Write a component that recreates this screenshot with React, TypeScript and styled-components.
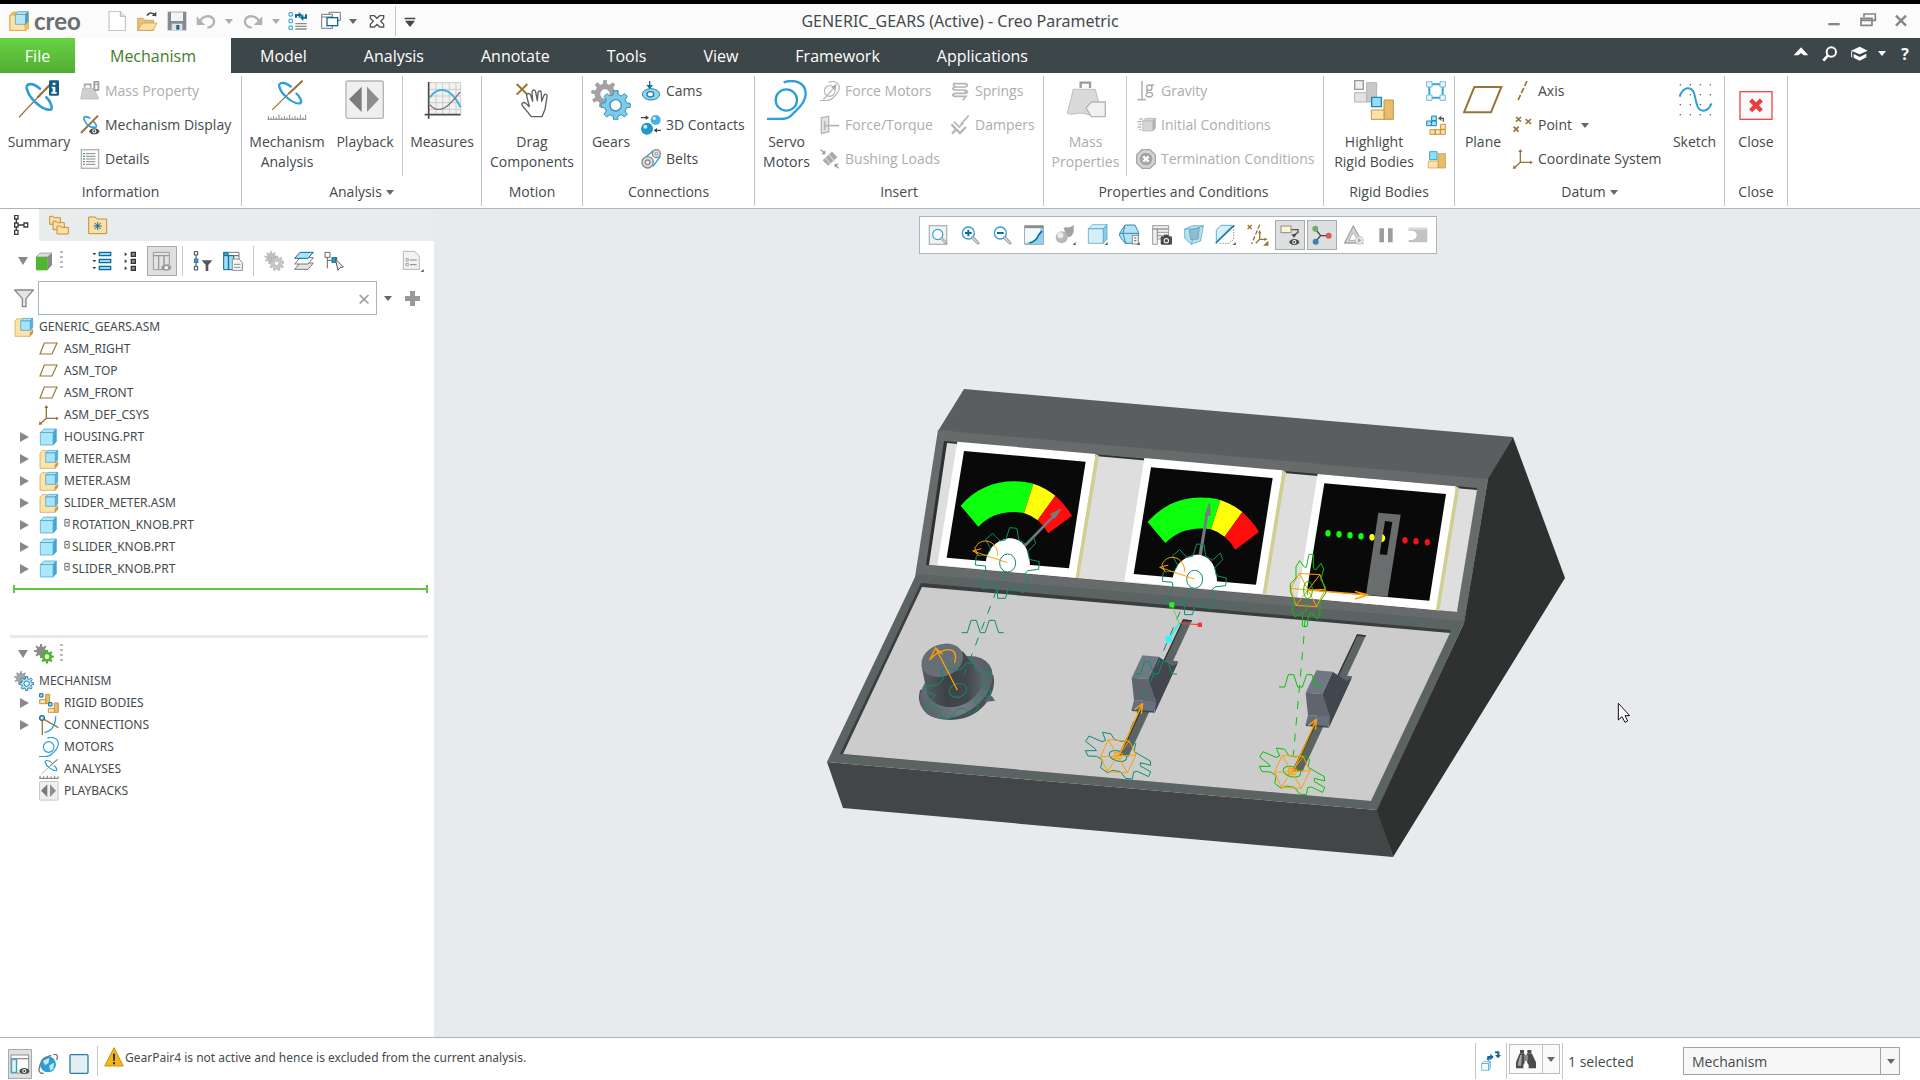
import React from 'react';
import styled, { createGlobalStyle, css } from 'styled-components';

const GlobalStyle = createGlobalStyle`
  *, *::before, *::after { box-sizing: border-box; }
  html, body { margin: 0; padding: 0; }
  body { font-family: "Open Sans", "Noto Sans", sans-serif; font-size: 14px; color: #444a4c; background: #fff; }
  button, input, select { font: inherit; color: inherit; }
  button { background: none; border: 0; padding: 0; margin: 0; }
  svg { display: block; }
`;

/* ---------- icon drawings ---------- */

const blue = '#2b9fd8';
const deep = '#126a92';
const brown = '#9a7434';

const gearPath = (cx: number, cy: number, outer: number, inner: number, teeth: number) => {
  const pts: string[] = [];
  const step = (Math.PI * 2) / teeth;
  for (let i = 0; i < teeth; i += 1) {
    const a = i * step - Math.PI / 2;
    [[-0.3, inner], [-0.17, outer], [0.17, outer], [0.3, inner]].forEach(([f, r]) => {
      pts.push(`${(cx + Math.cos(a + f * step) * r).toFixed(1)} ${(cy + Math.sin(a + f * step) * r).toFixed(1)}`);
    });
  }
  return `M${pts.join('L')}Z`;
};

const Cube = ({ x, y, s, front, side, line }: { x: number; y: number; s: number; front: string; side: string; line: string }) => (
  <g stroke={line} strokeWidth="2" strokeLinejoin="round">
    <path d={`M${x} ${y + s * 0.22}L${x + s * 0.22} ${y}H${x + s}L${x + s * 0.8} ${y + s * 0.22}Z`} fill={front} />
    <path d={`M${x + s} ${y}V${y + s * 0.78}L${x + s * 0.8} ${y + s}V${y + s * 0.22}Z`} fill={side} />
    <path d={`M${x} ${y + s * 0.22}H${x + s * 0.8}V${y + s}H${x}Z`} fill={front} />
  </g>
);

const swirl = (
  <g fill="none" strokeLinecap="round">
    <path d="M57 352L116 289" stroke={brown} strokeWidth="4" />
    <path d="M114 291L158 246" stroke={brown} strokeWidth="7" />
    <path d="M120 266C100 248 78 248 80 264C86 296 128 332 152 329C160 324 150 302 139 292" stroke={blue} strokeWidth="8" />
  </g>
);

const spiral = (line: string) => (
  <g fill="none" stroke={line} strokeWidth="7">
    <path d="M50 7C80 -3 117 6 116 42C115 72 90 88 80 99C68 113 60 117 40 117H0" />
    <circle cx="58" cy="60" r="32" />
  </g>
);

const csys = (
  <g stroke={brown} fill={brown} strokeWidth="4">
    <path d="M22 8V40H52M22 40L6 55" fill="none" />
    <path d="M16 9L22 0L28 9ZM51 35L60 40L51 46ZM1 49L0 60L11 58Z" stroke="none" />
  </g>
);

const asmIcon = (
  <g strokeWidth="2" strokeLinejoin="round">
    <path d="M3 12L10 5H26V38H56V48L48 58H3Z" fill="#ffe3a6" stroke="#c69a4d" />
    <path d="M48 47L56 40V49L48 58Z" fill="#c69a4d" stroke="#c69a4d" />
    <Cube x={20} y={4} s={36} front="#a6e4fb" side="#4fb3dc" line="#3f9cc6" />
  </g>
);

const magnifier = (
  <g>
    <circle cx="25" cy="24" r="18" fill="#fff" stroke={blue} strokeWidth="4" />
    <path d="M38 38L54 54" stroke="#8a8a8a" strokeWidth="9" strokeLinecap="round" />
    <path d="M38 38L54 54" stroke="#e2e2e2" strokeWidth="4" strokeLinecap="round" />
  </g>
);

const cornerMark = <path d="M62 54V63H53Z" fill="#555" />;

const weight = (
  <g>
    <path d="M44 24V8H72V24" fill="none" stroke="#9c9c9c" strokeWidth="7" />
    <path d="M22 28H88L104 92C92 104 78 108 66 104C40 92 26 108 4 100Z" fill="#dadada" stroke="#bdbdbd" strokeWidth="3" />
    <path d="M60 84L76 66H118V110H76Z" fill="#f1f1f1" stroke="#b5b5b5" strokeWidth="4" />
  </g>
);

const play = (
  <g>
    <rect x="3" y="3" width="112" height="112" rx="5" fill="#efefef" stroke="#b4b4b4" strokeWidth="4" />
    <path d="M50 20V96L12 58Z" fill="#7b7b7b" />
    <path d="M66 20V96L102 58Z" fill="#8d8d8d" />
  </g>
);

const eye = (x: number, y: number) => (
  <g transform={`translate(${x} ${y})`}>
    <ellipse cx="15" cy="9" rx="15" ry="9" fill="#4c4c4c" />
    <circle cx="15" cy="9" r="6" fill="#fff" />
    <circle cx="15" cy="9" r="3" fill="#333" />
  </g>
);

const ruler = (
  <path d="M2 118H118M4 118V108M12 118V112M20 118V108M28 118V112M36 118V104M44 118V112M52 118V108M60 118V112M68 118V104M76 118V112M84 118V108M92 118V112M100 118V104M108 118V112M116 118V104" stroke="#8b8b8b" strokeWidth="3" fill="none" />
);

type Drawing = [string, React.ReactNode];

const drawings: Record<string, Drawing> = {
  logo: ['0 0 60 60', <g strokeWidth="2">
    <path d="M2 12L12 3H56L60 8V50L50 59H2Z" fill="#f2bf5c" stroke="#d19a35" />
    <path d="M5 14H20V38H46V56H5Z" fill="#ffe3a6" stroke="none" />
    <Cube x={19} y={2} s={38} front="#b5e6f8" side="#3b9ecb" line="#3f9cc6" />
  </g>],
  newDoc: ['0 0 60 60', <g><path d="M6 1H40L55 16V59H6Z" fill="#fff" stroke="#8f9aa3" strokeWidth="2" /><path d="M40 1V16H55" fill="#dfe7ee" stroke="#8f9aa3" strokeWidth="2" /></g>],
  open: ['0 0 60 60', <g><path d="M2 58V22H18L24 28H50V58Z" fill="#e9c27a" stroke="#c59340" strokeWidth="2" /><path d="M2 58L16 36H60L48 58Z" fill="#fbdfa5" stroke="#c59340" strokeWidth="2" /><path d="M30 14C36 4 44 4 52 10" fill="none" stroke="#444" strokeWidth="5" /><path d="M44 14L58 16V2Z" fill="#444" /></g>],
  save: ['0 0 60 60', <g><path d="M2 2H58V58H2Z" fill="#858b8f" /><rect x="12" y="4" width="36" height="26" fill="#f1f3f4" /><rect x="14" y="38" width="32" height="20" fill="#dce3e7" /><rect x="28" y="42" width="9" height="14" fill="#1d5f80" /></g>],
  undo: ['0 0 60 60', <g fill="none" stroke="#b3b3b3" strokeWidth="7"><path d="M10 32C22 12 44 12 52 24C58 36 50 48 34 50" /><path d="M2 16V42H28Z" fill="#b3b3b3" stroke="none" /></g>],
  redo: ['0 0 60 60', <g fill="none" stroke="#b3b3b3" strokeWidth="7"><path d="M50 32C38 12 16 12 8 24C2 36 10 48 26 50" /><path d="M58 16V42H32Z" fill="#b3b3b3" stroke="none" /></g>],
  regen: ['0 0 60 60', <g fill="none" strokeWidth="3"><path d="M3 5H13V15H3ZM3 25H13V35H3ZM3 45H13V55H3Z" stroke={blue} /><path d="M22 38H56M22 46H56M22 54H56" stroke="#8b8b8b" strokeWidth="4" /><path d="M24 20V12H34M54 10V20H44" stroke={deep} strokeWidth="6" /><path d="M32 3L43 12L32 22ZM46 10L36 20L46 30Z" fill={deep} stroke="none" /></g>],
  windows: ['0 0 60 60', <g fill="#fff" stroke="#777" strokeWidth="3"><path d="M24 4H58V28H24Z" /><path d="M2 10H34V52H2Z" /><path d="M2 18H34" /><rect x="18" y="20" width="32" height="24" stroke={deep} strokeWidth="4" /></g>],
  closeWin: ['0 0 60 60', <path d="M10 14H22L30 22L38 14H50V22L41 31L50 40V48H38L30 40L22 48H10V40L19 31L10 22Z" fill="#fff" stroke="#555" strokeWidth="4" />],
  customise: ['0 0 60 60', <path d="M14 20H46V25H14ZM15 29H45L30 48Z" fill="#444" />],
  summary: ['57 240 120 120', <g>{swirl}<rect x="147" y="241" width="30" height="46" rx="4" fill="#125e84" /><path d="M158 248H166V255H158ZM155 260H166V276H170V281H154V276H158V265H155Z" fill="#fff" /></g>],
  massSmall: ['0 0 60 60', <g><path d="M14 20V10H32V20" fill="none" stroke="#a8a8a8" strokeWidth="5" /><path d="M8 22H42L56 54H2Z" fill="#cfcfcf" stroke="#b4b4b4" strokeWidth="2" /><rect x="40" y="0" width="18" height="30" fill="#a4a4a4" rx="3" /><path d="M46 5H52V9H46ZM46 12H52V24H46Z" fill="#fff" /></g>],
  mechDisplay: ['0 0 60 60', <g fill="none"><path d="M3 54L54 2" stroke={brown} strokeWidth="6" /><path d="M31 10C14 0 8 6 14 18C22 34 36 40 48 36C52 30 46 24 40 19" stroke={blue} strokeWidth="5" />{eye(28, 40)}</g>],
  details: ['0 0 60 60', <g><rect x="4" y="2" width="52" height="56" fill="#fafafa" stroke="#b4b4b4" strokeWidth="4" /><path d="M18 14H46M18 22H46M18 30H46M18 38H46M18 46H46" stroke="#8b8b8b" strokeWidth="3" /><path d="M10 14H14M10 22H14M10 30H14M10 38H14M10 46H14" stroke={deep} strokeWidth="4" /></g>],
  mechAnalysis: ['0 0 120 120', <g><g transform="translate(-34 -193) scale(.88 .8)">{swirl}</g>{ruler}</g>],
  playback: ['0 0 120 120', play],
  measures: ['0 0 120 120', <g fill="none"><rect x="22" y="8" width="94" height="94" fill="#f2f2f2" /><path d="M42 8V102M62 8V102M82 8V102M102 8V102M116 8V102M22 8H116M22 28H116M22 48H116M22 68H116M22 88H116" stroke="#cdcdcd" strokeWidth="3" /><path d="M24 52C44 22 82 14 116 82" stroke="#46b1e1" strokeWidth="6" /><path d="M24 74C38 94 60 92 80 74C98 58 108 44 114 36" stroke="#777" strokeWidth="4" /><path d="M20 6V116M8 104H116" stroke="#4b4b4b" strokeWidth="5" /></g>],
  drag: ['0 0 120 120', <g fill="none"><path d="M14 12L46 44M46 12L14 44" stroke={brown} strokeWidth="6" /><path d="M58 110L32 78C26 70 34 64 41 70L52 80L44 48C43 39 53 38 56 46L62 64L60 36C61 28 70 28 71 36L76 62L78 38C80 30 89 32 88 40L89 64L96 46C100 40 107 44 105 50L99 88L90 110Z" fill="#fff" stroke="#606060" strokeWidth="4" strokeLinejoin="round" /></g>],
  gears: ['0 0 120 120', <g><path d={gearPath(42, 42, 42, 31, 9)} fill="#a3a3a3" /><circle cx="42" cy="42" r="14" fill="#fff" /><path d={gearPath(74, 76, 44, 33, 8)} fill="#7fcaea" stroke="#3792bd" strokeWidth="3" /><circle cx="74" cy="76" r="17" fill="#fff" stroke="#3792bd" strokeWidth="4" /></g>],
  cams: ['0 0 60 60', <g><ellipse cx="30" cy="40" rx="26" ry="17" fill="#8ed5f0" stroke="#2a7fa8" strokeWidth="3" /><ellipse cx="28" cy="40" rx="10" ry="8" fill="#fff" stroke="#2a7fa8" strokeWidth="4" /><path d="M26 0V12" stroke={deep} strokeWidth="4" /><path d="M16 12H36L26 24Z" fill={deep} /></g>],
  contacts: ['0 0 60 60', <g><circle cx="44" cy="15" r="15" fill="#45b4df" /><circle cx="40" cy="10" r="5" fill="#d6f2fc" /><circle cx="18" cy="41" r="18" fill="#2497c9" /><circle cx="13" cy="35" r="6" fill="#c6ecfa" /><path d="M0 8H18M42 46H60" stroke="#444" strokeWidth="4" /><path d="M14 1L24 8L14 15ZM48 39L38 46L48 53Z" fill="#444" /></g>],
  belts: ['0 0 60 60', <g fill="none" stroke="#8b8b8b"><path d="M4 34L38 4M36 52L58 22" stroke={blue} strokeWidth="4" /><circle cx="20" cy="40" r="17" fill="#ddd" strokeWidth="4" /><circle cx="20" cy="40" r="7" fill="#fff" strokeWidth="4" /><circle cx="46" cy="14" r="12" fill="#ddd" strokeWidth="4" /><circle cx="46" cy="14" r="4" fill="#fff" strokeWidth="3" /></g>],
  servo: ['0 0 120 120', spiral(blue)],
  forceMotor: ['0 0 60 60', <g><g transform="scale(.5)">{spiral('#b6b6b6')}</g><path d="M10 56L46 16" stroke="#b6b6b6" strokeWidth="4" /><path d="M50 8L34 18L46 28Z" fill="#a8a8a8" /></g>],
  forceTorque: ['0 0 60 60', <g fill="none" stroke="#b6b6b6" strokeWidth="4"><path d="M4 8L26 4V50L4 56Z" fill="#e4e4e4" /><path d="M14 18V46M14 32H58" strokeWidth="5" /></g>],
  bushing: ['0 0 60 60', <g><path d="M12 38L40 12M20 46L48 20" stroke="#aaa" strokeWidth="12" /><path d="M16 26L32 46M26 16L44 38" stroke="#d4d4d4" strokeWidth="4" /><path d="M2 2L14 12M56 58L46 48" stroke="#999" strokeWidth="4" /><path d="M16 4V16H4ZM44 56V44H56Z" fill="#999" /></g>],
  springs: ['0 0 60 60', <path d="M10 8H44C56 10 54 17 44 18H16C6 20 6 26 16 27H44C56 29 54 36 44 37H16C6 39 6 45 16 46H48L38 58M12 8C8 12 12 17 18 18M46 27C42 33 50 34 44 37" fill="none" stroke="#b6b6b6" strokeWidth="5" />],
  dampers: ['0 0 60 60', <g fill="none" stroke="#b6b6b6" strokeWidth="7"><path d="M4 28L30 54L48 36" /><path d="M12 20L28 36L40 24M32 28L56 2" strokeWidth="5" /><path d="M6 56L18 44" /></g>],
  massBig: ['0 0 120 120', weight],
  gravity: ['0 0 60 60', <g><path d="M18 0V56M4 56H30" stroke="#b6b6b6" strokeWidth="5" /><circle cx="40" cy="20" r="8" fill="none" stroke="#a8a8a8" strokeWidth="4" /><path d="M46 12H54M34 28C28 34 36 34 44 35C54 38 50 48 40 48C28 48 28 40 36 35" stroke="#a8a8a8" strokeWidth="4" fill="none" /></g>],
  initial: ['0 0 60 60', <g><Cube x={20} y={10} s={38} front="#d6d6d6" side="#b0b0b0" line="#b0b0b0" /><path d="M10 12H20M4 20H16M8 28H16M4 36H16M10 44H16" stroke="#999" strokeWidth="3" /></g>],
  termination: ['0 0 60 60', <g><path d="M18 2H42L58 18V42L42 58H18L2 42V18Z" fill="#d3d3d3" stroke="#a6a6a6" strokeWidth="4" /><circle cx="30" cy="30" r="19" fill="#a3a3a3" /><path d="M22 22L38 38M38 22L22 38" stroke="#fff" strokeWidth="7" /></g>],
  highlight: ['0 0 120 120', <g strokeWidth="3"><path d="M2 2H28V28H2Z" fill="#eee" stroke="#999" strokeWidth="4" /><path d="M38 8H68V66H38Z" fill="#c8c8c8" stroke="#b4b4b4" /><path d="M2 38H38V66H2Z" fill="#e2e2e2" stroke="#b4b4b4" /><path d="M90 60H118V118H90Z" fill="#e6bd6b" stroke="#c19545" /><path d="M52 90H90V118H52Z" fill="#ffe3a6" stroke="#c19545" /><path d="M53 52H82V80H53Z" fill="#8fe0fb" stroke="#1d86b3" strokeWidth="4" /></g>],
  bodyFrame: ['0 0 60 60', <g fill="none" stroke="#35a6d6"><path d="M18 10H42M18 50H42M10 18V42M50 18V42" strokeWidth="6" /><path d="M2 2H18V18H2ZM42 2H58V18H42ZM2 42H18V58H2ZM42 42H58V58H42Z" fill="#e9f6fc" stroke="#79bad6" strokeWidth="3" /></g>],
  bodySplit: ['0 0 60 60', <g strokeWidth="3"><path d="M2 18H16V32H2ZM17 18H31V32H17ZM17 3H31V17H17Z" fill="#a6e4fb" stroke="#1d86b3" /><path d="M12 44H27V58H12ZM28 44H43V58H28ZM44 44H58V58H44ZM44 28H58V43H44Z" fill="#ffe3a6" stroke="#c19545" /><path d="M42 10H52V20" fill="none" stroke="#555" strokeWidth="4" /><path d="M46 2L36 10L46 18Z" fill="#555" /></g>],
  bodyBase: ['0 0 60 60', <g strokeWidth="2"><path d="M36 14H59V57H36Z" fill="#e6bd6b" stroke="#c19545" /><path d="M7 36H36V57H7Z" fill="#ffe3a6" stroke="#c19545" /><path d="M11 8H33V32H11Z" fill="#8fe0fb" stroke="#3fa3cb" strokeWidth="3" /></g>],
  plane: ['0 0 120 120', <path d="M34 21H115L84 97H3Z" fill="#fff" stroke={brown} strokeWidth="6" />],
  planeSmall: ['0 0 120 120', <path d="M32 24H108L78 90H6Z" fill="#fff" stroke={brown} strokeWidth="7" />],
  axis: ['0 0 60 60', <path d="M42 0L14 60" stroke={brown} strokeWidth="5" strokeDasharray="17 6" />],
  point: ['0 0 60 60', <path d="M9 6L24 20M24 6L9 20M38 12L54 27M54 12L38 27M2 35L17 50M17 35L2 50" stroke={brown} strokeWidth="5" />],
  csys: ['0 0 60 60', csys],
  sketch: ['0 0 120 120', <g><g fill="#666">{[12, 42, 72, 102].map((y) => [14, 44, 74, 104].map((x) => <rect key={`${x}-${y}`} x={x} y={y} width="4" height="4" />))}</g><path d="M14 50C24 20 50 16 58 42C64 66 66 92 84 92C96 92 104 84 110 70" fill="none" stroke={blue} strokeWidth="6" /></g>],
  closeBig: ['0 0 120 120', <g><rect x="12" y="35" width="96" height="83" fill="#fafafa" stroke="#ea4a4a" strokeWidth="4" /><path d="M44 60L76 92M76 60L44 92" stroke="#e53e3e" strokeWidth="13" /></g>],

  tabTree: ['0 0 60 60', <path d="M2 1H12V12H2ZM2 24H12V36H2ZM30 24H41V36H30ZM2 46H12V58H2ZM7 12V24M7 36V46M12 30H30" fill="#fff" stroke="#3d3d3d" strokeWidth="4" />],
  tabFolders: ['0 0 60 60', <g fill="#fbe0a5" stroke="#c0903f" strokeWidth="3"><path d="M2 4H12L15 8H34V28H2Z" /><path d="M12 19H22L25 23H46V44H12Z" /><path d="M24 33H34L37 37H58V57H24Z" /></g>],
  tabFav: ['0 0 60 60', <g><path d="M2 6H22L26 12H56V56H2Z" fill="#fbe0a5" stroke="#c0903f" strokeWidth="3" /><path d="M29 21V45M17 33H41M20 24L38 42M38 24L20 42" stroke={deep} strokeWidth="3" /></g>],
  greenCube: ['0 0 60 60', <g><path d="M6 18L18 6H54L40 18Z" fill="#ddd" stroke="#888" strokeWidth="2" /><path d="M40 18L54 6V42L40 58Z" fill="#8a8a8a" /><rect x="6" y="18" width="35" height="40" fill="#52b52f" /></g>],
  expandAll: ['0 0 60 60', <g><path d="M22 4H56V14H22ZM22 25H56V35H22ZM22 46H56V56H22Z" fill="#8fdcf8" stroke={deep} strokeWidth="4" /><path d="M1 6H13L7 13ZM1 27H13L7 34ZM1 48H13L7 55Z" fill="#444" /></g>],
  collapseAll: ['0 0 60 60', <g><path d="M28 4H40V16H28ZM28 25H40V37H28ZM28 46H40V58H28Z" fill="#8d8d8d" stroke="#333" strokeWidth="4" /><path d="M8 4L16 10L8 16ZM8 25L16 31L8 37ZM8 46L16 52L8 58Z" fill="#444" /></g>],
  columnsEye: ['0 0 60 60', <g><path d="M4 4H52V14H4ZM4 14H20V56H4ZM20 14H36V56H20ZM36 14H52V42H36Z" fill="#e3e3e3" stroke="#999" strokeWidth="3" /><ellipse cx="43" cy="50" rx="15" ry="9" fill="#9b9b9b" /><circle cx="43" cy="50" r="5" fill="#fff" /></g>],
  treeFilter: ['0 0 60 60', <g><path d="M4 2H14V12H4ZM4 46H14V57H4ZM9 12V46" fill="#fff" stroke="#444" strokeWidth="3" /><rect x="4" y="24" width="11" height="11" fill={blue} stroke={deep} strokeWidth="2" /><path d="M26 28H58L46 42V60H38V42Z" fill="#555" /></g>],
  columnsDoc: ['0 0 60 60', <g><path d="M2 4H16V14H2Z" fill={blue} stroke={deep} strokeWidth="3" /><path d="M16 4H48V14H16ZM32 14H48V30H32Z" fill="#fff" stroke="#777" strokeWidth="3" /><path d="M2 14H16V56H2ZM17 14H32V56H17Z" fill="#9fe0f8" stroke={deep} strokeWidth="3" /><path d="M28 24H48L58 34V58H28Z" fill="#f7f7f7" stroke="#8d8d8d" strokeWidth="3" /><path d="M33 40H52M33 49H52" stroke="#8d8d8d" strokeWidth="3" /></g>],
  gearsGrey: ['0 0 60 60', <g><path d={gearPath(21, 20, 20, 14, 9)} fill="#bdbdbd" /><path d={gearPath(38, 37, 22, 16, 9)} fill="#c9c9c9" stroke="#a4a4a4" strokeWidth="2" /><circle cx="38" cy="37" r="7" fill="#fff" stroke="#a4a4a4" strokeWidth="2" /></g>],
  layers: ['0 0 60 60', <g strokeWidth="3" strokeLinejoin="round"><path d="M18 36H58L42 55H2Z" fill="#e4e4e4" stroke="#777" /><path d="M18 20H58L42 39H2Z" fill="#fff" stroke="#777" /><path d="M18 4H58L42 22H2Z" fill="#a6e4fb" stroke={deep} /></g>],
  treeSelect: ['0 0 60 60', <g fill="#fff" strokeWidth="3"><path d="M3 4H18V19H3ZM10 19V52M10 28H24" stroke="#666" fill="none" /><rect x="24" y="20" width="14" height="14" stroke={deep} fill={blue} /><path d="M34 24L58 48L48 50L42 58Z" fill="#eee" stroke="#555" /></g>],
  docList: ['0 0 66 66', <g><path d="M4 4H38L52 18V58H4Z" fill="#f2f2f2" stroke="#b6b6b6" strokeWidth="3" /><path d="M24 30H44M24 44H44" stroke="#888" strokeWidth="3" /><path d="M12 26H19V33H12ZM12 40H19V47H12Z" fill="none" stroke="#888" strokeWidth="2" /><path d="M65 57V66H56Z" fill="#555" /></g>],
  funnel: ['0 0 60 60', <path d="M2 6H58L36 32V56H25V32Z" fill="#e4e4e4" stroke="#888" strokeWidth="4" />],
  asm: ['0 0 60 60', asmIcon],
  prt: ['0 0 60 60', <Cube x={4} y={6} s={48} front="#a9e8ff" side="#3fa9d4" line="#3f9cc6" />],
  pinned: ['0 0 20 30', <path d="M3 3H17V25H3ZM9 12H12V15H9Z" fill="#fff" stroke="#555" strokeWidth="3" />],
  gearsGreen: ['0 0 60 60', <g><path d={gearPath(21, 21, 21, 14, 8)} fill="#8b8b8b" /><path d={gearPath(39, 38, 21, 15, 8)} fill="#4cb52a" /><circle cx="39" cy="38" r="7" fill="#fff" /></g>],
  mechTree: ['0 0 60 60', <g><path d={gearPath(21, 21, 21, 15, 9)} fill="#a3a3a3" /><path d={gearPath(38, 38, 21, 15, 8)} fill="#b5e6f8" stroke="#2a7fa8" strokeWidth="3" /><circle cx="38" cy="38" r="8" fill="#fff" stroke="#2a7fa8" strokeWidth="3" /></g>],
  rigid: ['0 0 60 60', <g strokeWidth="3"><path d="M20 4H32V32H20Z" fill="#e6bd6b" stroke="#c19545" /><path d="M2 20H20V32H2Z" fill="#ffe3a6" stroke="#c19545" /><path d="M46 30H58V58H46Z" fill="#e6bd6b" stroke="#c19545" /><path d="M28 46H46V58H28Z" fill="#ffe3a6" stroke="#c19545" /><path d="M2 2H12V12H2ZM29 29H39V39H29Z" fill="#8fe0fb" stroke={deep} /></g>],
  connections: ['0 0 60 60', <g fill="none"><path d="M10 8V60M10 10L58 38" stroke={brown} strokeWidth="4" /><path d="M50 4C50 32 36 50 16 52" stroke={blue} strokeWidth="4" /><circle cx="9" cy="9" r="7" fill="#c3ecfb" stroke={deep} strokeWidth="4" /></g>],
  motors: ['0 0 120 120', spiral(blue)],
  analyses: ['0 0 120 120', <g><g transform="translate(-36 -193) scale(.92 .8)">{swirl}</g><path d="M2 116H118M6 116V100M28 116V104M50 116V100M72 116V104M94 116V100M114 116V104" stroke="#777" strokeWidth="6" /></g>],
  playbacks: ['0 0 120 120', play],

  refit: ['0 0 60 60', <g><rect x="4" y="2" width="52" height="56" fill="#f2f2f2" stroke="#b4b4b4" strokeWidth="4" /><g transform="translate(8 8) scale(.85)">{magnifier}</g></g>],
  zoomIn: ['0 0 60 60', <g>{magnifier}<path d="M15 24H35M25 14V34" stroke={deep} strokeWidth="6" /></g>],
  zoomOut: ['0 0 60 60', <g>{magnifier}<path d="M15 24H35" stroke={deep} strokeWidth="6" /></g>],
  repaint: ['0 0 60 60', <g><rect x="2" y="2" width="56" height="56" fill="#8ed3ee" stroke="#8d8d8d" strokeWidth="2" /><path d="M2 6H58" stroke="#8d8d8d" strokeWidth="7" /><path d="M3 10H50C46 34 32 50 3 54Z" fill="#f1f9fc" /><path d="M16 54C30 52 38 44 44 30L54 18" stroke={deep} strokeWidth="5" fill="none" /></g>],
  shading: ['0 0 66 66', <g><path d="M26 12C34 6 40 16 56 2V24C50 42 36 44 32 30Z" fill="#a2a2a2" /><circle cx="20" cy="40" r="18" fill="#b8b8b8" /><circle cx="16" cy="34" r="9" fill="#ececec" />{cornerMark}</g>],
  display: ['0 0 66 66', <g><Cube x={4} y={2} s={56} front="#d5effa" side="#8bcde8" line="#3f9cc6" />{cornerMark}</g>],
  views: ['0 0 66 66', <g><path d="M18 3H48L58 24V50L48 58H18L2 36V28Z" fill="#b4e2f3" stroke="#2a8cb8" strokeWidth="3" /><path d="M18 3L12 28H58M2 28H12L20 58" stroke="#2a8cb8" strokeWidth="3" fill="none" /><rect x="40" y="34" width="18" height="26" fill="#f4f4f4" stroke="#8d8d8d" strokeWidth="3" /><path d="M46 42H52M46 50H52" stroke="#555" strokeWidth="3" />{cornerMark}</g>],
  viewMgr: ['0 0 60 60', <g><path d="M2 2H50V12H2ZM2 12H16V58H2ZM16 12H50V42H16ZM16 22H50M16 32H50" fill="#f0f0f0" stroke="#9a9a9a" strokeWidth="3" /><rect x="26" y="34" width="34" height="25" rx="4" fill="#4a4a4a" /><rect x="36" y="29" width="14" height="8" fill="#4a4a4a" /><circle cx="43" cy="47" r="8" fill="#fff" /><circle cx="43" cy="47" r="5" fill="#4a4a4a" /></g>],
  perspective: ['0 0 60 60', <g stroke="#4a9dc0" strokeWidth="2"><path d="M2 12L26 2H58L50 48L22 58L2 40Z" fill="#b8dfee" /><path d="M2 12H34L22 58M34 12L58 2" fill="none" /><path d="M16 16L46 8L42 42L20 44Z" fill="#8fbdcf" /></g>],
  section: ['0 0 66 66', <g><path d="M4 18L18 4H52L4 52Z" fill="#d9eff8" stroke="#5ab3d8" strokeWidth="3" /><path d="M56 8V46L42 58H10" fill="none" stroke="#8d8d8d" strokeWidth="3" strokeDasharray="4 4" /><path d="M2 58L58 4" stroke={deep} strokeWidth="4" />{cornerMark}</g>],
  datums: ['0 0 66 66', <g stroke={brown} strokeWidth="4" fill="none"><path d="M2 3L14 15M14 3L2 15" /><path d="M38 2L14 60" strokeDasharray="13 6" /><path d="M38 24V46H56M38 46L26 58" /><path d="M38 18L43 28H33ZM62 46L52 41V51Z" fill={brown} stroke="none" />{cornerMark}</g>],
  annot: ['0 0 60 60', <g><rect x="3" y="3" width="30" height="20" fill="#fff4cf" stroke="#8d8d8d" strokeWidth="3" /><path d="M34 14H54V22L42 30" fill="none" stroke="#555" strokeWidth="4" /><path d="M34 28H50L42 38Z" fill="#444" />{eye(28, 42)}</g>],
  spin: ['0 0 60 60', <g><path d="M10 12L26 32L48 32M26 32L12 48" fill="none" stroke="#444" strokeWidth="4" /><circle cx="10" cy="11" r="9" fill="#6cae6c" /><circle cx="50" cy="32" r="9" fill="#d85a5a" /><circle cx="11" cy="50" r="9" fill="#3c83b0" /></g>],
  prism: ['0 0 60 60', <g><path d="M28 3L56 54H2Z" fill="#d3d3d3" stroke="#a6a6a6" strokeWidth="4" /><path d="M28 22L42 46H15Z" fill="#fff" stroke="#b4b4b4" strokeWidth="3" /><circle cx="46" cy="46" r="12" fill="#e9e9e9" stroke="#b4b4b4" strokeWidth="2" /><path d="M42 39L53 46L42 53Z" fill="#aaa" /></g>],
  pause: ['0 0 60 60', <path d="M10 10H24V52H10ZM36 10H50V52H36Z" fill="#9d9d9d" />],
  flow: ['0 0 60 60', <g><path d="M2 8H58V52H2V44C16 48 26 40 26 30C26 20 16 16 2 18Z" fill="#c2c2c2" /><path d="M2 8H58V14H2Z" fill="#dcdcdc" /></g>],

  navToggle: ['0 0 60 60', <g><path d="M3 3H56V14H3ZM3 14H20V57H3ZM20 14H56V57H20Z" fill="#fff" stroke="#8d8d8d" strokeWidth="3" /><rect x="5" y="17" width="14" height="38" fill="#dff3fb" stroke={blue} strokeWidth="3" />{eye(28, 42)}</g>],
  globe: ['0 0 60 60', <g><circle cx="30" cy="31" r="24" fill="#2b9fd8" /><path d="M14 20L34 12L32 26L22 34ZM34 34L48 26L46 44L36 50Z" fill="#bfe8f8" /><path d="M46 2C54 -2 62 4 56 18M40 4C20 8 2 30 3 48C4 56 10 60 18 57" fill="none" stroke="#6c7a80" strokeWidth="4" /></g>],
  blank: ['0 0 60 60', <g><rect x="3" y="2" width="54" height="56" rx="3" fill="#e3eef5" stroke="#2a7fa8" strokeWidth="4" /></g>],
  warning: ['0 0 60 60', <g><path d="M30 2L58 57H2Z" fill="#f4b61d" stroke="#cf8f10" strokeWidth="3" strokeLinejoin="round" /><path d="M27 20H33L32 42H28ZM27 46H33V52H27Z" fill="#222" /></g>],
  regenStatus: ['0 0 60 60', <g><Cube x={2} y={32} s={26} front="#fff" side="#e0f2fa" line={blue} /><path d="M22 26V18H30M52 12V4H42" fill="none" stroke={deep} strokeWidth="6" /><path d="M28 8L38 18L28 28ZM42 12H60L51 22ZM16 22H28L22 30Z" fill={deep} /></g>],
  binoculars: ['0 0 60 60', <g fill="#4c4c4c"><path d="M12 3H24V14H12ZM34 3H46V14H34Z" /><path d="M10 14H26V58H0V40ZM32 14H48L60 40V58H34Z" /><rect x="24" y="18" width="12" height="18" fill="#888" /><path d="M6 42L13 18H18L15 50H6Z" fill="#a6a6a6" /><path d="M22 58V48L30 36L38 48V58Z" fill="#fafafa" /></g>],
  minimise: ['0 0 60 60', <path d="M10 36H44V43H10Z" fill="#858585" />],
  restore: ['0 0 60 60', <path d="M18 18V9H52V28H42M9 22H42V43H9ZM9 28H42" fill="none" stroke="#858585" strokeWidth="5" />],
  shut: ['0 0 60 60', <path d="M15 14L45 44M45 14L15 44" stroke="#858585" strokeWidth="7" />],
  chevronUp: ['0 0 60 60', <path d="M8 34L30 10L52 34H38L30 27L22 34Z" fill="#fff" />],
  find: ['0 0 60 60', <g fill="none" stroke="#fff"><circle cx="34" cy="24" r="14" strokeWidth="6" /><path d="M24 34L10 50" strokeWidth="8" /></g>],
  learn: ['0 0 60 60', <g fill="#fff"><path d="M6 20L32 8L56 20L32 31Z" /><path d="M14 30L32 39L52 29V40L32 50L14 41Z" /><path d="M8 22V40" stroke="#fff" strokeWidth="3" /></g>],
};

const IconSvg = styled.svg<{ $size: number }>`
  width: ${(p) => p.$size}px;
  height: ${(p) => p.$size}px;
  flex: none;
`;

const Icon = ({ name, size = 20 }: { name: string; size?: number }) => (
  <IconSvg $size={size} viewBox={drawings[name][0]} aria-hidden="true">{drawings[name][1]}</IconSvg>
);

const Caret = styled.span<{ $color?: string }>`
  display: inline-block;
  width: 0;
  height: 0;
  border: 4px solid transparent;
  border-top: 5px solid ${(p) => p.$color ?? '#666'};
  border-bottom: 0;
  flex: none;
`;

/* ---------- window frame ---------- */

const Shell = styled.div`
  display: flex;
  flex-direction: column;
  height: 100vh;
  min-height: 700px;
  border-top: 4px solid #000;
  overflow: hidden;
`;

const TitleBar = styled.header`
  display: grid;
  grid-template-columns: 1fr auto 1fr;
  align-items: center;
  height: 34px;
  background: #fbfbfb;
`;

const QuickAccess = styled.div`
  display: flex;
  align-items: center;
  padding-left: 9px;
`;

const Brand = styled.span`
  font: 700 24px/28px Lato, sans-serif;
  color: #6a6d6f;
  width: 77px;
  padding-left: 5px;
`;

const ToolButton = styled.button<{ $width: number }>`
  display: flex;
  align-items: center;
  justify-content: center;
  width: ${(p) => p.$width}px;
  height: 30px;
`;

const Rule = styled.span<{ $height: number; $gap?: number }>`
  width: 1px;
  height: ${(p) => p.$height}px;
  margin: 0 ${(p) => p.$gap ?? 0}px;
  background: #c3c7c8;
  flex: none;
`;

const WindowTitle = styled.h1`
  margin: 0;
  font-family: "Noto Sans", "Open Sans", sans-serif;
  font-size: 16px;
  font-weight: 400;
  line-height: 24px;
`;

const WindowButtons = styled.div`
  display: flex;
  justify-content: flex-end;
  gap: 13px;
  padding-right: 9px;
`;

const TabBar = styled.nav`
  display: flex;
  height: 35px;
  background: #3d4648;
`;

const RibbonTab = styled.button<{ $kind?: 'file' | 'active' }>`
  padding: 2px 28px 0 29px;
  font-size: 16px;
  line-height: 33px;
  color: #fff;
  ${(p) => p.$kind === 'file' && css`
    width: 75px;
    padding: 2px 0 0;
    background: linear-gradient(#68d244, #52ac33);
  `}
  ${(p) => p.$kind === 'active' && css`
    width: 156px;
    padding: 2px 0 0;
    background: #fff;
    color: #437c26;
  `}
`;

const TabTools = styled.div`
  display: flex;
  align-items: center;
  gap: 9px;
  margin-left: auto;
  padding: 0 5px 4px 0;
  color: #fff;
  font-weight: 700;
  font-size: 16px;
`;

/* ---------- ribbon ---------- */

const Ribbon = styled.section`
  display: flex;
  height: 136px;
  flex: none;
  padding-top: 3px;
  border-bottom: 1px solid #a9b8b9;
`;

const Group = styled.section<{ $width: number }>`
  display: flex;
  flex-direction: column;
  width: ${(p) => p.$width}px;
  flex: none;
  margin-bottom: 2px;
  border-right: 1px solid #bcc5c6;
`;

const GroupBody = styled.div`
  display: flex;
  height: 104px;
  padding-left: 4px;
`;

const GroupName = styled.h2`
  display: flex;
  align-items: center;
  justify-content: center;
  gap: 4px;
  margin: 0;
  font-size: 14px;
  font-weight: 400;
  line-height: 28px;
`;

const BigButton = styled.button<{ $width: number }>`
  display: flex;
  flex-direction: column;
  align-items: center;
  width: ${(p) => p.$width}px;
  flex: none;
  padding-top: 4px;
  line-height: 20px;
  white-space: pre-line;
  &:disabled { color: #adadad; }
  svg { margin-bottom: 12px; }
`;

const Column = styled.div`
  display: flex;
  flex-direction: column;
  margin-right: 10px;
`;

const InsetColumn = styled(Column)`margin-left: 6px;`;

const SmallButton = styled.button`
  display: flex;
  align-items: center;
  gap: 5px;
  height: 34px;
  padding-bottom: 4px;
  line-height: 30px;
  white-space: nowrap;
  &:disabled { color: #adadad; }
`;

const MenuCaret = styled(Caret)`margin-left: 4px;`;

const Big = ({ icon, label, width, disabled }: { icon: string; label: string; width: number; disabled?: boolean }) => (
  <BigButton $width={width} disabled={disabled}><Icon name={icon} size={40} />{label}</BigButton>
);

const Small = ({ icon, label, disabled, menu, title }: { icon: string; label?: string; disabled?: boolean; menu?: boolean; title?: string }) => (
  <SmallButton disabled={disabled} aria-label={title}>
    <Icon name={icon} />{label}{menu && <MenuCaret />}
  </SmallButton>
);

/* ---------- side panel ---------- */

const Workspace = styled.main`
  display: flex;
  flex: 1;
  min-height: 0;
`;

const SidePanel = styled.aside`
  width: 435px;
  flex: none;
  border-right: 1px solid #e8eaee;
  background: #fff;
`;

const PanelTabs = styled.div`
  display: flex;
  height: 32px;
  background: #e8ecec;
`;

const PanelTab = styled.button<{ $active?: boolean }>`
  display: flex;
  align-items: center;
  justify-content: center;
  width: 39px;
  padding-left: ${(p) => (p.$active ? 8 : 0)}px;
  background: ${(p) => (p.$active ? '#fff' : 'transparent')};
`;

const PanelTools = styled.div<{ $compact?: boolean }>`
  display: flex;
  align-items: center;
  height: ${(p) => (p.$compact ? 32 : 39)}px;
  padding: 0 6px 0 14px;
`;

const PanelButton = styled.button<{ $pressed?: boolean }>`
  display: flex;
  align-items: center;
  justify-content: center;
  width: 30px;
  height: 30px;
  flex: none;
  ${(p) => p.$pressed && css`border: 1px solid #a9a9a9; background: #dedfe1;`}
`;

const Expander = styled.span<{ $open?: boolean }>`
  width: 0;
  height: 0;
  flex: none;
  margin: ${(p) => (p.$open ? '0 6px 0 4px' : '0 10px 0 0')};
  border: 5px solid transparent;
  ${(p) => (p.$open
    ? css`border-top: 8px solid #888; border-bottom: 0;`
    : css`border-left: 9px solid #888; border-right: 0;`)}
`;

const Grip = styled.span<{ $after: number }>`
  width: 3px;
  height: 20px;
  margin: 0 ${(p) => p.$after}px 0 6px;
  background: repeating-linear-gradient(#bbb 0 2px, transparent 2px 5px);
`;

const Spacer = styled.span`flex: 1;`;

const SearchRow = styled.div`
  display: flex;
  align-items: center;
  height: 36px;
  padding: 0 14px;
`;

const SearchField = styled.label`
  display: flex;
  align-items: center;
  flex: 1;
  height: 34px;
  margin: 0 7px 0 4px;
  border: 1px solid #a9b8b6;
`;

const SearchInput = styled.input`
  flex: 1;
  min-width: 0;
  border: 0;
  outline: 0;
  padding: 0 8px;
  background: transparent;
`;

const Cross = styled.button`
  width: 24px;
  font-size: 22px;
  line-height: 20px;
  color: #999;
`;

const Plus = styled.button`
  width: 15px;
  height: 15px;
  margin-left: 13px;
  background:
    linear-gradient(#999, #999) center / 15px 5px no-repeat,
    linear-gradient(#999, #999) center / 5px 15px no-repeat;
`;

const Tree = styled.ul`
  margin: 0;
  padding: 0 0 0 14px;
  list-style: none;
  font-family: "Noto Sans", "Open Sans", sans-serif;
  font-size: 12px;
`;

const TreeRow = styled.li<{ $root?: boolean }>`
  display: flex;
  align-items: center;
  height: 22px;
  line-height: 22px;
  padding-left: ${(p) => (p.$root ? 0 : 6)}px;
  white-space: nowrap;
`;

const TreeIcon = styled.span<{ $leaf?: boolean }>`
  margin: 0 5px 0 ${(p) => (p.$leaf ? 19 : 0)}px;
`;

const PinIcon = styled.svg`
  width: 6px;
  height: 10px;
  margin: 0 2px 4px 0;
`;

const InsertLine = styled.div`
  height: 8px;
  margin: 5px 6px 0 13px;
  border: solid #5fc741;
  border-width: 0 2px;
  background: linear-gradient(#5fc741, #5fc741) center / 100% 2px no-repeat;
`;

const PanelDivider = styled.div`
  height: 3px;
  margin: 42px 6px 0 10px;
  background: #e5eaea;
`;

/* ---------- model viewport ---------- */

const Viewport = styled.section`
  position: relative;
  flex: 1;
  min-width: 0;
  background: #e8eaee;
`;

const Scene = styled.svg`
  width: 100%;
  height: 100%;
`;

const ViewTools = styled.div`
  position: absolute;
  top: 7px;
  left: 50%;
  transform: translateX(-50%);
  display: flex;
  gap: 2px;
  padding: 3px;
  border: 1px solid #a9b8b6;
  background: #fff;
`;

/* ---------- status bar ---------- */

const StatusBar = styled.footer`
  display: flex;
  align-items: center;
  height: 43px;
  flex: none;
  padding: 4px 20px 0 8px;
  border-top: 1px solid #a9b8b9;
`;

const StatusIcons = styled.div`
  display: flex;
  gap: 1px;
  align-items: center;
  padding-top: 5px;
`;

const StatusToggle = styled(PanelButton)`width: 24px;`;

const Message = styled.p`
  display: flex;
  align-items: center;
  gap: 1px;
  margin: 0 auto 8px 3px;
  font-family: "Noto Sans", "Open Sans", sans-serif;
  font-size: 12px;
`;

const FindButton = styled.button`
  display: flex;
  align-items: center;
  height: 30px;
  margin: 0 2px 4px;
  border: 1px solid #bdbdbd;
  background: #fafafa;
  & > svg { margin: 0 6px; }
  & > span:last-child { margin: 0 4px; }
`;

const Count = styled.span`
  width: 120px;
  padding-left: 5px;
`;

const FilterBox = styled.div`
  display: grid;
  width: 217px;
  height: 28px;
  align-items: center;
`;

const Filter = styled.select`
  grid-area: 1 / 1;
  width: 100%;
  height: 28px;
  padding: 0 8px;
  border: 1px solid #a4a4a4;
  border-radius: 0;
  background: #f7f7f7;
  appearance: none;
`;

const FilterArrow = styled.span`
  grid-area: 1 / 1;
  justify-self: end;
  display: flex;
  align-items: center;
  justify-content: center;
  width: 20px;
  height: 28px;
  border-left: 1px solid #a4a4a4;
  pointer-events: none;
`;

/* ---------- the console model ---------- */

const teal = '#0a9068';
const lime = '#06c406';
const amber = '#ffa000';

const MeterFrame = () => (
  <g>
    <path d="M172 215L587 252L527 623L112 585Z" fill="#fff" />
    <path d="M587 252L597 257L537 625L527 623Z" fill="#cfcf90" />
    <path d="M192 243L557 275L507 595L140 563Z" fill="#090909" />
  </g>
);

const roundGear = 'M329 473L351 475L356 509L376 522L400 500L407 520L383 545L388 568L418 575L416 598L383 602L374 612L388 648L368 669L345 652L326 655L316 685L293 685L292 657L280 640L250 658L235 637L258 607L256 588L226 585L229 557L262 555L272 537L257 508L278 490L300 513L317 510Z';

const Dial = ({ needle }: { needle: React.ReactNode }) => (
  <g>
    <MeterFrame />
    <path d="M182 407C240 340 320 322 400 341L372 429C320 420 270 433 235 470Z" fill="#0cff0c" />
    <path d="M400 341Q436 353 466 377L413 451Q394 436 372 429Z" fill="#ffff0c" />
    <path d="M466 377Q496 404 516 437L445 490Q433 468 413 451Z" fill="#ff0c0c" />
    {needle}
    <path d="M257 578C262 530 300 503 335 505C370 509 390 540 390 592Z" fill="#fff" />
    <g fill="none" strokeWidth="3" stroke={teal}>
      <path d={roundGear} />
      <ellipse cx="323" cy="579" rx="24" ry="27" />
      <path d="M312 603L305 626" />
    </g>
    <g fill="none" strokeWidth="3" stroke={amber}>
      <path d="M322 578L218 543L244 536M222 543L236 556M224 533L232 552M226 533C240 502 290 505 294 557" />
    </g>
  </g>
);

const rack = 'M0 37H17L28 0H44L56 37H70L83 0H99L111 37H126';

const Slider = () => (
  <g>
    <path d="M351 643L378 646L187 1055L158 1050Z" fill="#5b6463" />
    <path d="M351 643L378 646L376 650L352 648L163 1052L158 1050Z" fill="#2f3232" />
    <path d="M298 765L337 769L267 922L247 822Z" fill="#5c636b" />
    <path d="M278 755L320 783L335 775L267 922L270 890L247 822Z" fill="#42474f" />
    <path d="M229 751L278 755L247 822L197 818Z" fill="#6f7984" />
    <path d="M197 818L247 822L270 890L204 885Z" fill="#5e656c" />
    <path d="M204 885L270 890L265 920L197 913Z" fill="#66707b" />
    <path d="M197 913L265 919L267 923L198 918Z" fill="#40454b" />
  </g>
);

const SlideGear = ({ color }: { color: string }) => (
  <g fill="none" strokeWidth="3">
    <path stroke={color} d="M847 457L872 461L884 479L905 484L930 480L947 491L942 514L956 523L991 543L992 556L961 548L961 558L992 575L986 590L952 574L941 576L937 597L917 595L901 575L878 571L862 578L842 563L847 540L830 529L804 528L796 512L829 512L825 506L797 484L807 468L846 485L857 481Z" />
    <ellipse stroke={color} cx="894" cy="528" rx="27" ry="15" transform="rotate(16 894 528)" />
    <path stroke={amber} d="M865 479L928 483L948 525L922 578L862 575L841 530ZM865 479L893 528L928 483M841 530L893 528L948 525M862 575L893 528L922 578M884 516L908 522L904 536L884 536Z" />
    <path stroke={amber} strokeWidth="4" d="M898 526L968 370L943 390M968 370L964 402" />
  </g>
);

const ConsoleModel = () => (
  <Scene viewBox="435 209 1485 828" preserveAspectRatio="xMidYMid meet" role="img" aria-label="GENERIC_GEARS assembly">
    <defs>
      <linearGradient id="knobBody" x1="0" x2="1"><stop offset="0" stopColor="#595f64" /><stop offset=".4" stopColor="#3e4246" /><stop offset=".75" stopColor="#44484c" /><stop offset="1" stopColor="#5d6267" /></linearGradient>
      <linearGradient id="knobBase" x1="0" x2="1"><stop offset="0" stopColor="#596068" /><stop offset=".4" stopColor="#747d86" /><stop offset="1" stopColor="#565d64" /></linearGradient>
    </defs>
    <path d="M964 389L1513 437L1488 480L938 431Z" fill="#5a5e5e" />
    <path d="M938 430L1488 479L1464 624L915 577Z" fill="#676b6c" />
    <path d="M1513 437L1565 578L1393 857L1376 810L1464 623L1488 479Z" fill="#2f3030" />
    <path d="M827 762L1377 810L1393 857L843 808Z" fill="#434646" />
    <path d="M918 574L1464 621L1464 623L1377 810L827 762L915 577Z" fill="#5b6463" />
    <path d="M944 441L1477 488L1457 612L926 565Z" fill="#2f3131" />
    <path d="M947 443L1477 490L1457 612L929 565Z" fill="#dedede" />
    <path d="M921 583L1451 630L1371 801L840 754Z" fill="#3b3e3e" />
    <path d="M922 587L1450 633L1371 801L843 754Z" fill="#cccccc" />

    <g transform="translate(900 370) scale(.33333)">
      <Dial needle={<g fill="#777b7e"><path d="M371 525L462 432L467 437L377 530Z" /><path d="M483 417L452 433L464 445Z" stroke="#777b7e" strokeWidth="3" /></g>} />
      <g transform="translate(561 49)">
        <Dial needle={<g fill="#777b7e"><path d="M334 510L356 382L364 383L344 512Z" /><path d="M368 350L354 387H369Z" stroke="#777b7e" strokeWidth="3" /></g>} />
      </g>
      <g transform="translate(1081 97)"><MeterFrame /></g>
    </g>

    <g transform="translate(1240 420) scale(.33333)">
      <path d="M415 278L482 284L443 530L378 524Z" fill="#696d6d" />
      <path d="M435 303L457 306L441 405L419 403Z" fill="#090909" />
      {[264, 297, 330, 363, 396].map((x, i) => <ellipse key={x} cx={x} cy={340 + i * 3} rx="8" ry="10" fill={i < 4 ? '#0cff0c' : '#ffff0c'} />)}
      <path d="M429 345A8 10 0 0 1 427 364Z" fill="#ffff0c" stroke="#ffff0c" strokeWidth="4" />
      {[495, 528, 562].map((x, i) => <ellipse key={x} cx={x} cy={361 + i * 3} rx="8" ry="10" fill="#f01414" />)}
      <Slider />
      <g fill="none" stroke={amber} strokeWidth="3">
        <path d="M178 460L240 464L256 508L230 560L168 556L152 505ZM178 460L204 510L240 464M152 505L204 510L256 508M168 556L204 510L230 560" />
        <path d="M204 510L384 525L345 514M384 525L345 537" strokeWidth="4" />
      </g>
      <g fill="none" stroke={lime} strokeWidth="3">
        <path d="M207 403L220 403L220 444L227 450L243 430L251 447L242 478L257 502L257 519L240 545L240 575L232 598L213 578L206 588L201 620L187 618L188 577L165 591L157 573L162 542L151 515L151 492L168 474L168 440L179 422L193 441L199 442Z" />
        <ellipse cx="204" cy="510" rx="13" ry="26" />
        <path d="M202 510V525M200 550L193 622M192 648L160 1005" strokeDasharray="24 25" />
        <path d={rack} transform="translate(117 764)" />
      </g>
      <g transform="translate(-738 527)"><SlideGear color={lime} /></g>
      <path d="M1135 850V900L1146 890L1155 907L1163 903L1155 887H1169Z" fill="#fff" stroke="#111" strokeWidth="3" />
    </g>

    <g transform="translate(820 580) scale(.33333)">
      <path d="M297 348C294 402 362 436 440 412C492 394 524 342 522 300L520 284L300 330Z" fill="#485057" />
      <path d="M498 356L515 347L525 362L494 366Z" fill="#59626a" />
      <ellipse cx="409" cy="322" rx="120" ry="80" transform="rotate(-34 409 322)" fill="url(#knobBase)" />
      <path d="M304 255L322 345C350 390 410 390 450 362C486 336 492 300 486 284L428 214Z" fill="url(#knobBody)" />
      <ellipse cx="367" cy="241" rx="64" ry="48" transform="rotate(-20 367 241)" fill="#666f78" />
      <g transform="translate(738 -525)"><Slider /></g>
      <g fill="none" stroke={teal} strokeWidth="3">
        <path d="M439 248L463 250L467 269L486 283L508 272L514 290L487 304L489 321L513 333L510 349L477 347L464 362L475 384L455 404L431 384L413 386L390 416L364 414L358 387L340 378L321 392L316 376L347 346L320 335L318 318L355 314L372 295L363 272L382 262L410 272L428 265Z" />
        <ellipse cx="414" cy="331" rx="27" ry="20" transform="rotate(-18 414 331)" />
        <path d="M530 30L432 285M1100 48L905 510" strokeDasharray="25 26" />
        <path d={rack} transform="translate(425 121)" />
        <path d={rack} transform="translate(945 245)" />
      </g>
      <path d="M412 330L347 204L329 240M347 204L367 222M328 240C360 206 404 196 407 230L404 249" fill="none" stroke={amber} strokeWidth="4" />
      <SlideGear color={teal} />
      <path d="M1078 130L1055 75" stroke="#5de03a" strokeWidth="3" />
      <path d="M1078 130L1140 134" stroke="#ff3030" strokeWidth="3" />
      <path d="M1078 130L1045 178" stroke="#28f0f4" strokeWidth="5" />
      <rect x="1048" y="67" width="15" height="15" fill="#28f628" />
      <rect x="1133" y="128" width="13" height="13" fill="#ff3030" />
      <rect x="1037" y="169" width="18" height="18" fill="#28f8fa" />
    </g>
  </Scene>
);

/* ---------- data ---------- */

const ribbonTabs = ['Model', 'Analysis', 'Annotate', 'Tools', 'View', 'Framework', 'Applications'];

type Node = { icon: string; label: string; expand?: boolean; pinned?: boolean };

const modelTree: Node[] = [
  { icon: 'planeSmall', label: 'ASM_RIGHT' },
  { icon: 'planeSmall', label: 'ASM_TOP' },
  { icon: 'planeSmall', label: 'ASM_FRONT' },
  { icon: 'csys', label: 'ASM_DEF_CSYS' },
  { icon: 'prt', label: 'HOUSING.PRT', expand: true },
  { icon: 'asm', label: 'METER.ASM', expand: true },
  { icon: 'asm', label: 'METER.ASM', expand: true },
  { icon: 'asm', label: 'SLIDER_METER.ASM', expand: true },
  { icon: 'prt', label: 'ROTATION_KNOB.PRT', expand: true, pinned: true },
  { icon: 'prt', label: 'SLIDER_KNOB.PRT', expand: true, pinned: true },
  { icon: 'prt', label: 'SLIDER_KNOB.PRT', expand: true, pinned: true },
];

const mechTree: Node[] = [
  { icon: 'rigid', label: 'RIGID BODIES', expand: true },
  { icon: 'connections', label: 'CONNECTIONS', expand: true },
  { icon: 'motors', label: 'MOTORS' },
  { icon: 'analyses', label: 'ANALYSES' },
  { icon: 'playbacks', label: 'PLAYBACKS' },
];

const viewTools = ['refit', 'zoomIn', 'zoomOut', 'repaint', 'shading', 'display', 'views', 'viewMgr', 'perspective', 'section', 'datums', 'annot', 'spin', 'prism', 'pause', 'flow'];

const TreeList = ({ root, icon, items }: { root: string; icon: string; items: Node[] }) => (
  <Tree>
    <TreeRow $root><TreeIcon><Icon name={icon} /></TreeIcon>{root}</TreeRow>
    {items.map((n, i) => (
      <TreeRow key={i}>
        {n.expand && <Expander />}
        <TreeIcon $leaf={!n.expand}><Icon name={n.icon} /></TreeIcon>
        {n.pinned && <PinIcon viewBox="0 0 20 30">{drawings.pinned[1]}</PinIcon>}
        {n.label}
      </TreeRow>
    ))}
  </Tree>
);

export default function App() {
  return (
    <>
      <GlobalStyle />
      <Shell>
        <TitleBar>
          <QuickAccess>
            <Icon name="logo" />
            <Brand>creo</Brand>
            <ToolButton $width={22} aria-label="New"><Icon name="newDoc" /></ToolButton>
            <ToolButton $width={37} aria-label="Open"><Icon name="open" /></ToolButton>
            <ToolButton $width={24} aria-label="Save"><Icon name="save" /></ToolButton>
            <ToolButton $width={34} aria-label="Undo"><Icon name="undo" /></ToolButton>
            <ToolButton $width={12} aria-label="Undo list"><Caret $color="#aaa" /></ToolButton>
            <ToolButton $width={35} aria-label="Redo"><Icon name="redo" /></ToolButton>
            <ToolButton $width={12} aria-label="Redo list"><Caret $color="#aaa" /></ToolButton>
            <ToolButton $width={32} aria-label="Regenerate"><Icon name="regen" /></ToolButton>
            <ToolButton $width={33} aria-label="Windows"><Icon name="windows" /></ToolButton>
            <ToolButton $width={12} aria-label="Windows list"><Caret /></ToolButton>
            <ToolButton $width={36} aria-label="Close window"><Icon name="closeWin" /></ToolButton>
            <Rule $height={30} />
            <ToolButton $width={28} aria-label="Customize"><Icon name="customise" /></ToolButton>
          </QuickAccess>
          <WindowTitle>GENERIC_GEARS (Active) - Creo Parametric</WindowTitle>
          <WindowButtons>
            <button aria-label="Minimize"><Icon name="minimise" /></button>
            <button aria-label="Restore"><Icon name="restore" /></button>
            <button aria-label="Close application"><Icon name="shut" /></button>
          </WindowButtons>
        </TitleBar>

        <TabBar>
          <RibbonTab $kind="file">File</RibbonTab>
          <RibbonTab $kind="active">Mechanism</RibbonTab>
          {ribbonTabs.map((t) => <RibbonTab key={t}>{t}</RibbonTab>)}
          <TabTools>
            <button aria-label="Collapse ribbon"><Icon name="chevronUp" /></button>
            <button aria-label="Search commands"><Icon name="find" /></button>
            <button aria-label="Learn"><Icon name="learn" /></button>
            <Caret $color="#fff" />
            <ToolButton $width={20}>?</ToolButton>
          </TabTools>
        </TabBar>

        <Ribbon>
          <Group $width={242}>
            <GroupBody>
              <Big icon="summary" label="Summary" width={70} />
              <InsetColumn>
                <Small icon="massSmall" label="Mass Property" disabled />
                <Small icon="mechDisplay" label="Mechanism Display" />
                <Small icon="details" label="Details" />
              </InsetColumn>
            </GroupBody>
            <GroupName>Information</GroupName>
          </Group>
          <Group $width={240}>
            <GroupBody>
              <Big icon="mechAnalysis" label={'Mechanism\nAnalysis'} width={82} />
              <Big icon="playback" label="Playback" width={74} />
              <Rule $height={100} />
              <Big icon="measures" label="Measures" width={78} />
            </GroupBody>
            <GroupName>Analysis <Caret /></GroupName>
          </Group>
          <Group $width={101}>
            <GroupBody><Big icon="drag" label={'Drag\nComponents'} width={92} /></GroupBody>
            <GroupName>Motion</GroupName>
          </Group>
          <Group $width={172}>
            <GroupBody>
              <Big icon="gears" label="Gears" width={48} />
              <InsetColumn>
                <Small icon="cams" label="Cams" />
                <Small icon="contacts" label="3D Contacts" />
                <Small icon="belts" label="Belts" />
              </InsetColumn>
            </GroupBody>
            <GroupName>Connections</GroupName>
          </Group>
          <Group $width={289}>
            <GroupBody>
              <Big icon="servo" label={'Servo\nMotors'} width={55} />
              <InsetColumn>
                <Small icon="forceMotor" label="Force Motors" disabled />
                <Small icon="forceTorque" label="Force/Torque" disabled />
                <Small icon="bushing" label="Bushing Loads" disabled />
              </InsetColumn>
              <Column>
                <Small icon="springs" label="Springs" disabled />
                <Small icon="dampers" label="Dampers" disabled />
              </Column>
            </GroupBody>
            <GroupName>Insert</GroupName>
          </Group>
          <Group $width={280}>
            <GroupBody>
              <Big icon="massBig" label={'Mass\nProperties'} width={75} disabled />
              <Rule $height={100} $gap={3} />
              <InsetColumn>
                <Small icon="gravity" label="Gravity" disabled />
                <Small icon="initial" label="Initial Conditions" disabled />
                <Small icon="termination" label="Termination Conditions" disabled />
              </InsetColumn>
            </GroupBody>
            <GroupName>Properties and Conditions</GroupName>
          </Group>
          <Group $width={131}>
            <GroupBody>
              <Big icon="highlight" label={'Highlight\nRigid Bodies'} width={92} />
              <InsetColumn>
                <Small icon="bodyFrame" title="Body frame" />
                <Small icon="bodySplit" title="Redefine body" />
                <Small icon="bodyBase" title="Ground body" />
              </InsetColumn>
            </GroupBody>
            <GroupName>Rigid Bodies</GroupName>
          </Group>
          <Group $width={270}>
            <GroupBody>
              <Big icon="plane" label="Plane" width={48} />
              <InsetColumn>
                <Small icon="axis" label="Axis" />
                <Small icon="point" label="Point" menu />
                <Small icon="csys" label="Coordinate System" />
              </InsetColumn>
              <Big icon="sketch" label="Sketch" width={46} />
            </GroupBody>
            <GroupName>Datum <Caret /></GroupName>
          </Group>
          <Group $width={63}>
            <GroupBody><Big icon="closeBig" label="Close" width={54} /></GroupBody>
            <GroupName>Close</GroupName>
          </Group>
        </Ribbon>

        <Workspace>
          <SidePanel>
            <PanelTabs>
              <PanelTab $active aria-label="Model tree"><Icon name="tabTree" /></PanelTab>
              <PanelTab aria-label="Folders"><Icon name="tabFolders" /></PanelTab>
              <PanelTab aria-label="Favorites"><Icon name="tabFav" /></PanelTab>
            </PanelTabs>
            <PanelTools>
              <Expander $open />
              <Icon name="greenCube" />
              <Grip $after={24} />
              <PanelButton aria-label="Expand all"><Icon name="expandAll" /></PanelButton>
              <PanelButton aria-label="Collapse all"><Icon name="collapseAll" /></PanelButton>
              <PanelButton $pressed aria-label="Show columns"><Icon name="columnsEye" /></PanelButton>
              <Rule $height={30} $gap={5} />
              <PanelButton aria-label="Tree filters"><Icon name="treeFilter" /></PanelButton>
              <PanelButton aria-label="Tree columns"><Icon name="columnsDoc" /></PanelButton>
              <Rule $height={30} $gap={5} />
              <PanelButton aria-label="Settings"><Icon name="gearsGrey" /></PanelButton>
              <PanelButton aria-label="Layers"><Icon name="layers" /></PanelButton>
              <PanelButton aria-label="Select in tree"><Icon name="treeSelect" /></PanelButton>
              <Spacer />
              <PanelButton aria-label="Tree options"><Icon name="docList" size={22} /></PanelButton>
            </PanelTools>
            <SearchRow>
              <Icon name="funnel" />
              <SearchField>
                <SearchInput type="text" aria-label="Filter tree" />
                <Cross aria-label="Clear">×</Cross>
              </SearchField>
              <Caret />
              <Plus aria-label="Add filter" />
            </SearchRow>
            <TreeList root="GENERIC_GEARS.ASM" icon="asm" items={modelTree} />
            <InsertLine />
            <PanelDivider />
            <PanelTools $compact>
              <Expander $open />
              <Icon name="gearsGreen" />
              <Grip $after={0} />
            </PanelTools>
            <TreeList root="MECHANISM" icon="mechTree" items={mechTree} />
          </SidePanel>
          <Viewport>
            <ConsoleModel />
            <ViewTools role="toolbar" aria-label="View">
              {viewTools.map((t) => (
                <PanelButton key={t} aria-label={t} $pressed={t === 'annot' || t === 'spin'}>
                  <Icon name={t} size={['shading', 'display', 'views', 'section', 'datums'].includes(t) ? 22 : 20} />
                </PanelButton>
              ))}
            </ViewTools>
          </Viewport>
        </Workspace>

        <StatusBar>
          <StatusIcons>
            <StatusToggle $pressed aria-label="Navigator"><Icon name="navToggle" /></StatusToggle>
            <PanelButton aria-label="Browser"><Icon name="globe" /></PanelButton>
            <PanelButton aria-label="Full screen"><Icon name="blank" /></PanelButton>
          </StatusIcons>
          <Rule $height={30} $gap={3} />
          <Message role="status"><Icon name="warning" />GearPair4 is not active and hence is excluded from the current analysis.</Message>
          <Rule $height={36} />
          <PanelButton aria-label="Regeneration status"><Icon name="regenStatus" /></PanelButton>
          <Rule $height={36} />
          <FindButton aria-label="Find"><Icon name="binoculars" /><Rule $height={28} /><Caret /></FindButton>
          <Rule $height={36} />
          <Count>1 selected</Count>
          <FilterBox>
            <Filter aria-label="Selection filter" defaultValue="Mechanism"><option>Mechanism</option></Filter>
            <FilterArrow><Caret /></FilterArrow>
          </FilterBox>
        </StatusBar>
      </Shell>
    </>
  );
}
